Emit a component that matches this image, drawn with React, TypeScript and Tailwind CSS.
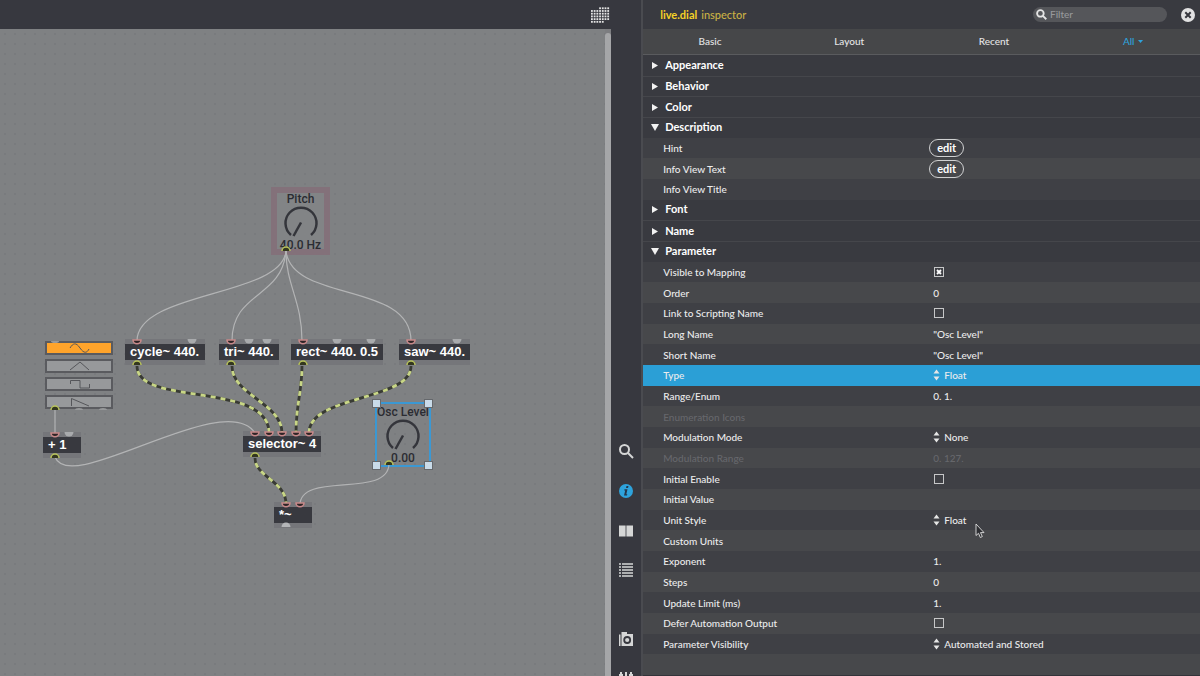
import React, { useState } from "react";

type Port = { x: number; live?: boolean };

type PatchObject = {
  text: string;
  x: number;
  y: number;
  width: number;
  inlets: Port[];
  outlets: Port[];
};

type Field = {
  label: string;
  kind?: "text" | "check" | "menu" | "edit";
  value?: string;
  checked?: boolean;
  dimmed?: boolean;
  selected?: boolean;
};

type Section = { title: string; fields?: Field[] };

const objects: PatchObject[] = [
  { text: "cycle~ 440.", x: 125, y: 310, width: 80, inlets: [{ x: 12, live: true }, { x: 67 }], outlets: [{ x: 12, live: true }] },
  { text: "tri~ 440.", x: 219, y: 310, width: 60, inlets: [{ x: 12, live: true }, { x: 30 }, { x: 48 }], outlets: [{ x: 12, live: true }] },
  { text: "rect~ 440. 0.5", x: 291, y: 310, width: 92, inlets: [{ x: 12, live: true }, { x: 46 }, { x: 80 }], outlets: [{ x: 12, live: true }] },
  { text: "saw~ 440.", x: 399, y: 310, width: 71, inlets: [{ x: 12, live: true }, { x: 58 }], outlets: [{ x: 12, live: true }] },
  {
    text: "selector~ 4",
    x: 243,
    y: 402,
    width: 78,
    inlets: [{ x: 12, live: true }, { x: 26, live: true }, { x: 39, live: true }, { x: 53, live: true }, { x: 66, live: true }],
    outlets: [{ x: 12, live: true }],
  },
  { text: "+ 1", x: 43, y: 403, width: 38, inlets: [{ x: 12, live: true }, { x: 26 }], outlets: [{ x: 12, live: true }] },
  { text: "*~", x: 274, y: 473, width: 38, inlets: [{ x: 12, live: true }, { x: 26, live: true }], outlets: [{ x: 12 }] },
];

const cords = [
  "M286 222 C282 268 137 262 137 312",
  "M286 222 C282 270 232 262 232 312",
  "M286 222 C286 256 302 272 302 312",
  "M286 222 C292 274 411 252 411 312",
  "M55 381 V405",
  "M55 428 C70 468 225 358 255 404",
  "M389 435 C388 470 300 442 300 476",
];

const signalCords = [
  "M137 337 C137 378 269 352 269 404",
  "M232 337 C232 366 282 374 282 404",
  "M302 337 C302 362 296 376 296 404",
  "M411 337 C411 372 309 366 309 404",
  "M255 429 C255 448 286 452 286 475",
];

const waveforms = [
  { name: "Sine", path: "M24 7 C27 2 30 1 34 7 C38 13 41 12 43 8" },
  { name: "Triangle", path: "M24 11 L34 3 L43 11" },
  { name: "Rectangle", path: "M24.500 7 V3.500 H34 V11 H43.500 V7" },
  { name: "Saw", path: "M25.500 11 V3.500 L43 11" },
];

const sections: Section[] = [
  { title: "Appearance" },
  { title: "Behavior" },
  { title: "Color" },
  {
    title: "Description",
    fields: [{ label: "Hint", kind: "edit" }, { label: "Info View Text", kind: "edit" }, { label: "Info View Title" }],
  },
  { title: "Font" },
  { title: "Name" },
  {
    title: "Parameter",
    fields: [
      { label: "Visible to Mapping", kind: "check", checked: true },
      { label: "Order", value: "0" },
      { label: "Link to Scripting Name", kind: "check" },
      { label: "Long Name", value: '"Osc Level"' },
      { label: "Short Name", value: '"Osc Level"' },
      { label: "Type", kind: "menu", value: "Float", selected: true },
      { label: "Range/Enum", value: "0. 1." },
      { label: "Enumeration Icons", dimmed: true },
      { label: "Modulation Mode", kind: "menu", value: "None" },
      { label: "Modulation Range", value: "0. 127.", dimmed: true },
      { label: "Initial Enable", kind: "check" },
      { label: "Initial Value" },
      { label: "Unit Style", kind: "menu", value: "Float" },
      { label: "Custom Units" },
      { label: "Exponent", value: "1." },
      { label: "Steps", value: "0" },
      { label: "Update Limit (ms)", value: "1." },
      { label: "Defer Automation Output", kind: "check" },
      { label: "Parameter Visibility", kind: "menu", value: "Automated and Stored" },
    ],
  },
];

function Inlet({ x, y, live }: { x: number; y: number; live?: boolean }) {
  if (!live) return <path d={`M${x - 4.5} ${y - 3} h9 a4.5 4.5 0 0 1 -9 0`} fill="#a9abad" />;
  return <path d={`M${x - 4} ${y - 2} a4 3.8 0 0 0 8 0 z`} fill="#2e2426" stroke="#c98a8b" strokeWidth="1.5" />;
}

function Outlet({ x, y, live }: { x: number; y: number; live?: boolean }) {
  if (!live) return <path d={`M${x - 4.5} ${y + 2} h9 a4.5 4.5 0 0 0 -9 0`} fill="#b4b6b8" />;
  return (
    <path d={`M${x - 4} ${y + 3} a4 4 0 0 1 8 0`} fill="#33361f" stroke="#b9c45c" strokeWidth="1.5" />
  );
}

function Dial({ title, value }: { title: string; value: string }) {
  return (
    <div className="flex flex-col items-center font-['Roboto',sans-serif] text-[12px] leading-3 font-medium text-[#2b2c32] whitespace-nowrap">
      <span>{title}</span>
      <svg width="38" height="34" viewBox="0 0 38 34" fill="none" stroke="#34353b" strokeWidth="2.5">
        <path d="M9 30 A15.500 15.500 0 1 1 29 30" />
        <path d="M19 17.500 L11.500 31" />
      </svg>
      <span>{value}</span>
    </div>
  );
}

function ObjectBox({ object }: { object: PatchObject }) {
  return (
    <div
      className="absolute border-y-[5px] border-[#75767a] bg-[#38393f] pl-[5px] text-[13px] leading-4 font-bold text-white whitespace-nowrap font-['Liberation_Sans',Arial,sans-serif]"
      style={{ left: object.x, top: object.y, width: object.width }}
    >
      {object.text}
    </div>
  );
}

function Patcher() {
  const [wave, setWave] = useState(0);

  return (
    <main className="relative flex-1 overflow-hidden bg-[#7f8183] bg-[radial-gradient(circle,#797b7e_1px,transparent_1px)] bg-[size:10px_10px]">
      {/* Waveform picker */}
      <div className="absolute top-[312px] left-[45px] flex w-[68px] flex-col gap-1">
        {waveforms.map((item, index) => (
          <button
            key={item.name}
            aria-label={item.name}
            onClick={() => setWave(index)}
            className={`h-3.5 overflow-hidden border-2 border-[#5a5b5f] ${index === wave ? "bg-[#ffa42b]" : "bg-[#97999b]"}`}
          >
            <svg width="64" height="10" viewBox="1 2 64 10" fill="none" stroke="#55565a">
              <path d={item.path} />
            </svg>
          </button>
        ))}
      </div>

      <div className="absolute top-[158px] left-[271px] h-[68px] w-[59px] border-[6px] border-[#83717a] bg-[#828486]">
        <Dial title="Pitch" value="40.0 Hz" />
      </div>

      <div className="absolute top-[373px] left-[375px] w-14 border-2 border-[#3b98d3] pt-0.5 pb-px">
        <div className="-mx-2">
          <Dial title="Osc Level" value="0.00" />
        </div>
      </div>

      {objects.map((object) => (
        <ObjectBox key={object.text} object={object} />
      ))}

      {/* Cords and ports */}
      <svg className="pointer-events-none absolute inset-0 h-full w-full" fill="none">
        <g stroke="#b3b4b5" strokeWidth="1.200">
          {cords.map((d) => (
            <path key={d} d={d} />
          ))}
        </g>
        {signalCords.map((d) => (
          <g key={d}>
            <path d={d} stroke="#393b34" strokeWidth="2.800" />
            <path d={d} stroke="#c8d686" strokeWidth="2.800" strokeDasharray="5 5" strokeDashoffset="5" />
          </g>
        ))}
        {objects.map((object) => (
          <g key={object.text}>
            {object.inlets.map((port) => (
              <Inlet key={port.x} x={object.x + port.x} y={object.y + 3} live={port.live} />
            ))}
            {object.outlets.map((port) => (
              <Outlet key={port.x} x={object.x + port.x} y={object.y + 23} live={port.live} />
            ))}
          </g>
        ))}
        <Outlet x={55} y={378} live />
        <Outlet x={286} y={219} live />
        <Outlet x={389} y={433} live />
        <g fill="#97999b">
          <path d="M51 312 h8 a4 2 0 0 1 -8 0" />
          <path d="M75 381 h8 a4 2 0 0 0 -8 0" />
          <path d="M99 381 h8 a4 2 0 0 0 -8 0" />
        </g>
        <g fill="#c9dbe9" stroke="#65686c">
          <rect x="372.500" y="370.500" width="8" height="8" />
          <rect x="424.500" y="370.500" width="8" height="8" />
          <rect x="372.500" y="432.500" width="8" height="8" />
          <rect x="424.500" y="432.500" width="8" height="8" />
        </g>
      </svg>
    </main>
  );
}

function GridIcon() {
  const rows = ["   xxxx", "xxxxxxx", "xxxxxxx", "xxxxxxx", "xxxxxxx", "xxxxx  "];
  return (
    <svg width="19" height="17" viewBox="0 0 21 18" fill="#e4e4e4">
      {rows.map((row, y) =>
        row.split("").map((cell, x) => cell === "x" && <rect key={`${x}-${y}`} x={x * 3} y={y * 3} width="2" height="2" />)
      )}
    </svg>
  );
}

function Toolbar() {
  return (
    <nav className="w-[30px] shrink-0 overflow-hidden bg-[#37383f] text-[#d5d6d6]">
      <div className="flex flex-col items-center pt-[431px]">
        <button aria-label="Search" className="h-10">
          <svg width="16" height="16" viewBox="0 0 16 16" fill="none" stroke="currentColor" strokeWidth="2">
            <circle cx="6.500" cy="6.500" r="4.500" />
            <path d="M10 10 L15 15" />
          </svg>
        </button>
        <button aria-label="Inspector" className="h-10">
          <svg width="16" height="16" viewBox="0 0 16 16">
            <circle cx="8" cy="8" r="7" fill="#2ea3dc" />
            <path d="M8.500 3 h2 l-0.500 2 h-2 z M6.500 6.200 h3 l-1.200 5 h1 l-0.300 1.300 h-3 l1.200 -5 h-1 z" fill="#25364a" />
          </svg>
        </button>
        <button aria-label="Reference" className="h-[39px]">
          <svg width="16" height="16" viewBox="0 0 16 16" fill="currentColor">
            <path d="M1 2.500 H7.600 V13.500 H1 Z M8.400 2.500 H15 V13.500 H8.400 Z" />
          </svg>
        </button>
        <button aria-label="Console" className="h-10">
          <svg width="16" height="16" viewBox="0 0 16 16" stroke="currentColor" strokeWidth="1.400">
            <path d="M1 2 H3 M1 5 H3 M1 8 H3 M1 11 H3 M1 14 H3 M4 2 H15 M4 5 H15 M4 8 H15 M4 11 H15 M4 14 H15" />
          </svg>
        </button>
        <button aria-label="Snapshots" className="mt-[29px] h-10">
          <svg width="16" height="16" viewBox="0 0 16 16" fill="currentColor">
            <path d="M1 3.500 H2.500 V15 H1 Z" />
            <path d="M3.500 1 H9 V3 H15 V15 H3.500 Z" />
            <circle cx="9.200" cy="9" r="3" fill="none" stroke="#37383f" strokeWidth="1.800" />
          </svg>
        </button>
        <button aria-label="Mixer" className="mt-3">
          <svg width="16" height="16" viewBox="0 0 16 16" stroke="currentColor" strokeWidth="2">
            <path d="M3 1 V15 M8 1 V15 M13 1 V15 M1 4 H5 M6 9 H10 M11 4 H15" />
          </svg>
        </button>
      </div>
    </nav>
  );
}

function FieldValue({ field, id }: { field: Field; id: string }) {
  if (field.kind === "edit") {
    return (
      <button id={id} className="-ml-1 h-[18px] w-[35px] rounded-full border border-[#d0d1d2] text-[11px] leading-4 font-bold text-white">
        edit
      </button>
    );
  }
  if (field.kind === "check") {
    return (
      <span className="relative ml-px flex">
        <input
          id={id}
          type="checkbox"
          defaultChecked={field.checked}
          className="peer size-2.5 appearance-none border border-[#c6c7c8]"
        />
        <svg className="pointer-events-none absolute inset-0 hidden peer-checked:block" viewBox="0 0 10 10" stroke="white" strokeWidth="1.800">
          <path d="M3 3 L7 7 M7 3 L3 7" />
        </svg>
      </span>
    );
  }
  if (field.kind === "menu") {
    return (
      <span className="flex items-center gap-1">
        <svg width="7" height="12" viewBox="0 0 7 12" fill="#e6e6e6" aria-hidden="true">
          <path d="M0.500 4.500 L3.500 0.500 L6.500 4.500 Z M0.500 7.500 L3.500 11.500 L6.500 7.500 Z" />
        </svg>
        <select id={id} defaultValue={field.value} className="appearance-none">
          <option>{field.value}</option>
        </select>
      </span>
    );
  }
  return <input id={id} defaultValue={field.value} disabled={field.dimmed} className="w-full min-w-0 bg-transparent" />;
}

function FieldRow({ field, index }: { field: Field; index: number }) {
  const id = field.label.toLowerCase().replace(/[^a-z]+/g, "-");
  const stripe = index % 2 === 0 ? "bg-[#3f4045]" : "bg-[#47484b]";

  return (
    <div
      className={`flex min-h-0 items-center pl-5 text-[10px] leading-4 ${field.selected ? "bg-[#2b9fd6]" : stripe} ${
        field.dimmed ? "text-[#66676b]" : "text-[#ececed]"
      }`}
    >
      <label htmlFor={id} className="w-[270px] shrink-0">
        {field.label}
      </label>
      <FieldValue field={field} id={id} />
    </div>
  );
}

function Inspector() {
  return (
    <aside className="flex w-[46.400%] shrink-0 flex-col bg-[#393a40]">
      <header className="flex h-[29px] shrink-0 items-center pr-[5px] pl-[17px] text-[11px]">
        <h1 className="flex flex-1 gap-1 pt-px text-[#c9b145]">
          <b className="text-[#f5d327]">live.dial</b> inspector
        </h1>
        <label className="mr-3.5 flex h-[15px] w-[134px] items-center gap-[3px] rounded-full bg-[#55565a] pl-[3px] text-[10px]">
          <svg width="11" height="11" viewBox="0 0 12 12" fill="none" stroke="#e5e5e5" strokeWidth="2" className="shrink-0">
            <circle cx="4.800" cy="4.800" r="3.600" />
            <path d="M7.500 7.500 L11.200 11.200" />
          </svg>
          <input aria-label="Filter" placeholder="Filter" className="w-full min-w-0 placeholder:text-[#97989b]" />
        </label>
        <button aria-label="Close inspector">
          <svg width="14" height="14" viewBox="0 0 14 14">
            <circle cx="7" cy="7" r="7" fill="#e2e2e3" />
            <path d="M4.300 4.300 L9.700 9.700 M9.700 4.300 L4.300 9.700" stroke="#37383f" strokeWidth="2" />
          </svg>
        </button>
      </header>

      <div className="flex h-[26px] shrink-0 items-center border-b border-[#5a5b5e] bg-[#464749] text-[10px] text-[#e4e4e5]">
        <button className="w-[24%]">Basic</button>
        <button className="w-[26%]">Layout</button>
        <button className="w-[26%]">Recent</button>
        <button className="flex w-[24%] items-center justify-center gap-1 text-[#2ea3dc]">
          All
          <svg width="5" height="3" viewBox="0 0 5 3" fill="currentColor">
            <path d="M0 0 H5 L2.500 3 Z" />
          </svg>
        </button>
      </div>

      <div className="grid min-h-0 flex-1 auto-rows-fr border-b border-[#33343a]">
        {sections.map((section, position) => (
          <React.Fragment key={section.title}>
            <button
              aria-expanded={Boolean(section.fields)}
              className={`flex min-h-0 items-center gap-1.5 pb-px pl-2 text-left text-[11px] leading-4 font-bold text-white ${
                position > 0 && !sections[position - 1].fields ? "border-t border-[#45464b]" : ""
              }`}
            >
              <svg width="8" height="8" viewBox="0 0 8 8" fill="#f2f2f2" aria-hidden="true">
                <path d={section.fields ? "M0 1 H8 L4 8 Z" : "M1 1 L7 4.500 L1 8 Z"} />
              </svg>
              {section.title}
            </button>
            {section.fields?.map((field, index) => (
              <FieldRow key={field.label} field={field} index={index} />
            ))}
          </React.Fragment>
        ))}
        <div className="bg-[#47484b]" />
      </div>
    </aside>
  );
}

export default function App() {
  return (
    <div className="relative flex h-screen min-h-[640px] overflow-hidden bg-[#37383f] font-['Lato',sans-serif] font-medium">
      <div className="flex min-w-0 flex-1 flex-col">
        <header className="flex h-[29px] shrink-0 items-center justify-end bg-[#37383f] pt-0.5 pr-px">
          <button aria-label="Grid">
            <GridIcon />
          </button>
        </header>
        <div className="flex min-h-0 flex-1">
          <Patcher />
          <div className="w-1.5 bg-[#7c7d80] pt-1">
            <div className="h-full rounded-t-full bg-[#a5a6a8]" />
          </div>
        </div>
      </div>
      <Toolbar />
      <div className="w-0.5 shrink-0 bg-[#4a4b50]" />
      <Inspector />

      <svg className="pointer-events-none absolute top-[523px] left-[975px]" width="10" height="16" viewBox="0 0 10 16">
        <path d="M1 1 V12.500 L3.500 10.300 L5.300 14.500 L7.300 13.600 L5.500 9.600 H9 Z" fill="#2d2e32" stroke="#e0e0e0" strokeWidth="0.900" />
      </svg>
    </div>
  );
}
